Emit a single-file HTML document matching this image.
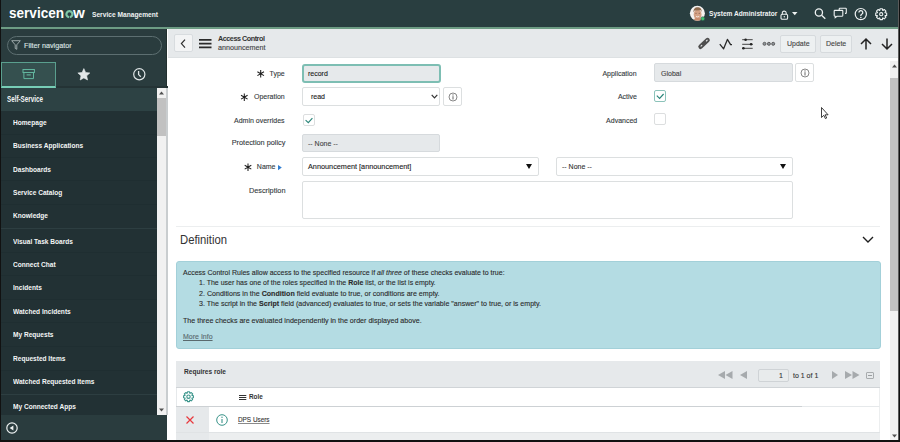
<!DOCTYPE html>
<html><head><meta charset="utf-8">
<style>
*{margin:0;padding:0;box-sizing:border-box}
html,body{width:900px;height:442px;overflow:hidden;background:#fff;font-family:"Liberation Sans",sans-serif}
.a{position:absolute}
.t{position:absolute;white-space:nowrap;line-height:1;-webkit-text-stroke:0.12px currentColor}
#frame{position:absolute;left:0;top:0;width:900px;height:442px;overflow:hidden;background:#fff}
.nav{-webkit-text-stroke:0;color:#f4f6f6;font-size:8px;font-weight:bold;left:12.5px;transform:scaleX(0.82);transform-origin:0 0}
.lab{color:#353b3e;font-size:7.7px;transform:scaleX(0.91);transform-origin:100% 0}
.box{position:absolute;border:1px solid #dcdfe0;border-radius:2px;background:#fff}
.ro{background:#e6e9eb;border-color:#d6dadd}
.cb{position:absolute;width:12px;height:12px;border:1px solid #dcdedf;border-radius:2px;background:#fff}
.ast{position:absolute;font-size:10px;color:#2b2b2b;line-height:1}
svg{position:absolute;overflow:visible}
</style></head><body>
<div id="frame">
<!-- ===== top header ===== -->
<div class="a" style="left:0;top:0;width:900px;height:27px;background:#293e40"></div>
<div class="a" style="left:0;top:27px;width:900px;height:2px;background:#6d9c84"></div>
<div class="t" style="left:9.4px;top:4.5px;font-size:15.5px;font-weight:bold;color:#fff;-webkit-text-stroke:0;transform:scaleX(0.875);transform-origin:0 0">servicen</div>
<svg style="left:64px;top:8.5px" width="11" height="10" viewBox="0 0 11 10"><path d="M5.034 8.178A3.0 3.0 0 1 1 5.766 8.178" fill="none" stroke="#7ec5a5" stroke-width="2.2"/></svg>
<div class="t" style="left:73px;top:4.5px;font-size:15.5px;font-weight:bold;color:#fff;-webkit-text-stroke:0;transform:scaleX(0.98);transform-origin:0 0">w</div>
<div class="t" style="left:92px;top:10.6px;font-size:8px;font-weight:bold;-webkit-text-stroke:0;transform:scaleX(0.83);transform-origin:0 0;color:#eef2f2">Service Management</div>
<!-- avatar in overlay -->
<div class="t" style="left:709px;top:10.2px;font-size:8px;font-weight:bold;-webkit-text-stroke:0;transform:scaleX(0.824);transform-origin:0 0;color:#f0f3f3">System Administrator</div>
<!-- lock -->
<svg style="left:780px;top:9.5px" width="9" height="10" viewBox="0 0 9 10"><path d="M2.3 4.4V3.1a1.95 1.95 0 0 1 3.9 0v1.3" fill="none" stroke="#e9eded" stroke-width="1.1"/><rect x="1" y="4.3" width="6.6" height="4.9" rx="1.3" fill="none" stroke="#e9eded" stroke-width="1.1"/><circle cx="4.3" cy="6.8" r="0.7" fill="#e9eded"/></svg>
<svg style="left:792px;top:12px" width="6" height="4" viewBox="0 0 6 4"><path d="M0 0h5.5L2.75 3.2z" fill="#eef2f2"/></svg>





<!-- ===== sidebar ===== -->
<div class="a" style="left:0;top:29px;width:167px;height:413px;background:#2a3c3e"></div>
<div class="a" style="left:7px;top:36px;width:155px;height:19px;border:1px solid #5d6f71;border-radius:10px"></div>
<svg style="left:11px;top:40px" width="10" height="10" viewBox="0 0 10 10"><path d="M0.7 0.7h8.6L5.8 4.8V9.3L4.2 8.4V4.8z" fill="none" stroke="#a9b4b5" stroke-width="0.9" stroke-linejoin="round"/></svg>
<div class="t" style="left:24px;top:42px;font-size:7.2px;color:#dfe5e5">Filter navigator</div>
<!-- tabs -->
<div class="a" style="left:1px;top:62px;width:55px;height:26px;background:#35504f;border:1px solid #5a9f8e;border-bottom:2px solid #77cdb6"></div>
<svg style="left:133px;top:68px" width="13" height="13" viewBox="0 0 13 13"><circle cx="6.3" cy="6.3" r="5.6" fill="none" stroke="#dfe5e6" stroke-width="1.2"/><path d="M5.6 3v3.6l2.2 2.2" fill="none" stroke="#dfe5e6" stroke-width="1.3"/></svg>
<!-- self-service -->
<div class="a" style="left:0;top:88px;width:157px;height:23px;background:#2d4244"></div>
<div class="a" style="left:56px;top:86px;width:112px;height:2px;background:#243335"></div>
<div class="t nav" style="left:6.8px;top:94.6px;font-size:8.3px;transform:scaleX(0.755)">Self-Service</div>
<div class="a" style="left:0;top:111px;width:157px;height:304px;background:#223134"></div>
<div class="a" style="left:0;top:134px;width:157px;height:1px;background:#1f2e31"></div><div class="a" style="left:0;top:157px;width:157px;height:1px;background:#1f2e31"></div><div class="a" style="left:0;top:180px;width:157px;height:1px;background:#1f2e31"></div><div class="a" style="left:0;top:204px;width:157px;height:1px;background:#1f2e31"></div><div class="a" style="left:0;top:252px;width:157px;height:1px;background:#1f2e31"></div><div class="a" style="left:0;top:275px;width:157px;height:1px;background:#1f2e31"></div><div class="a" style="left:0;top:299px;width:157px;height:1px;background:#1f2e31"></div><div class="a" style="left:0;top:322px;width:157px;height:1px;background:#1f2e31"></div><div class="a" style="left:0;top:346px;width:157px;height:1px;background:#1f2e31"></div><div class="a" style="left:0;top:370px;width:157px;height:1px;background:#1f2e31"></div>
<div class="a" style="left:0;top:228px;width:157px;height:1px;background:#2d3e41"></div>
<div class="a" style="left:0;top:394px;width:157px;height:1px;background:#2d3e41"></div>
<div class="t nav" style="top:119px">Homepage</div>
<div class="t nav" style="top:142px">Business Applications</div>
<div class="t nav" style="top:166px">Dashboards</div>
<div class="t nav" style="top:189px">Service Catalog</div>
<div class="t nav" style="top:212px">Knowledge</div>
<div class="t nav" style="top:238px">Visual Task Boards</div>
<div class="t nav" style="top:261px">Connect Chat</div>
<div class="t nav" style="top:284px">Incidents</div>
<div class="t nav" style="top:308px">Watched Incidents</div>
<div class="t nav" style="top:331px">My Requests</div>
<div class="t nav" style="top:355px">Requested Items</div>
<div class="t nav" style="top:378px">Watched Requested Items</div>
<div class="t nav" style="top:403px">My Connected Apps</div>
<!-- sidebar scrollbar -->
<div class="a" style="left:157px;top:88px;width:9px;height:327px;background:#f1f1f1"></div>
<div class="a" style="left:157px;top:98px;width:9px;height:38px;background:#c1c1c1"></div>
<svg style="left:159px;top:91px" width="5" height="4" viewBox="0 0 5 4"><path d="M0 3.5h5L2.5 0.5z" fill="#505050"/></svg>
<svg style="left:159px;top:408px" width="5" height="4" viewBox="0 0 5 4"><path d="M0 0.5h5L2.5 3.5z" fill="#505050"/></svg>
<!-- bottom bar -->
<div class="a" style="left:0;top:415px;width:167px;height:27px;background:#2a3c3e"></div>
<svg style="left:6.3px;top:422.2px" width="12" height="12" viewBox="0 0 12 12"><circle cx="6" cy="6" r="5.2" fill="none" stroke="#eef2f2" stroke-width="1.2"/><path d="M7.4 3.4v5.2L3.6 6z" fill="#eef2f2"/></svg>
<div class="a" style="left:166px;top:88px;width:2px;height:327px;background:#c9cdcf"></div><div class="a" style="left:166px;top:29px;width:1px;height:59px;background:#22302f"></div>

<!-- ===== main header ===== -->
<div class="a" style="left:168px;top:29px;width:731px;height:28.5px;background:#e6e9eb;border-bottom:1px solid #dde1e3"></div>
<div class="a" style="left:174px;top:34px;width:19px;height:18px;background:#f3f4f5;border:1px solid #d8dcdf;border-radius:2px"></div>
<svg style="left:180px;top:38px" width="6" height="10" viewBox="0 0 6 10"><path d="M5 1.6L1.4 5.6 5 9.6" fill="none" stroke="#2e2e2e" stroke-width="1.2"/></svg>
<svg style="left:199px;top:38px" width="13" height="11" viewBox="0 0 13 11"><path d="M0 1.8h12.5M0 5.6h12.5M0 9.4h12.5" stroke="#2b2b2b" stroke-width="1.8"/></svg>
<div class="t" style="left:218px;top:35px;font-size:7.2px;font-weight:bold;color:#333;letter-spacing:-0.45px;-webkit-text-stroke:0">Access Control</div>
<div class="t" style="left:218px;top:43.6px;font-size:7.2px;color:#444">announcement</div>
<!-- toolbar icons -->
<div class="a" style="left:780px;top:35px;width:36px;height:18px;background:#edf0f1;border:1px solid #d6dadd;border-radius:2px"></div>
<div class="t" style="left:787px;top:40px;font-size:7.7px;transform:scaleX(0.91);transform-origin:0 0;color:#444">Update</div>
<div class="a" style="left:820px;top:35px;width:32px;height:18px;background:#edf0f1;border:1px solid #d6dadd;border-radius:2px"></div>
<div class="t" style="left:826px;top:40px;font-size:7.7px;transform:scaleX(0.91);transform-origin:0 0;color:#444">Delete</div>
<svg style="left:860px;top:38px" width="12" height="12" viewBox="0 0 12 12"><path d="M6 11.5V1M1 6l5-5 5 5" fill="none" stroke="#222" stroke-width="1.5"/></svg>
<svg style="left:881px;top:38px" width="12" height="12" viewBox="0 0 12 12"><path d="M6 0.5V11M1 6l5 5 5-5" fill="none" stroke="#222" stroke-width="1.5"/></svg>

<!-- ===== main scrollbar ===== -->
<div class="a" style="left:889.5px;top:61px;width:8.5px;height:381px;background:#f1f1f1"></div>
<div class="a" style="left:889.5px;top:78px;width:8.5px;height:233px;background:#c1c1c1"></div>
<svg style="left:891.5px;top:64px" width="5" height="4" viewBox="0 0 5 4"><path d="M0 3.5h5L2.5 0.5z" fill="#505050"/></svg>
<svg style="left:891.5px;top:434px" width="5" height="4" viewBox="0 0 5 4"><path d="M0 0.5h5L2.5 3.5z" fill="#505050"/></svg>

<!-- ===== form ===== -->
<div class="t lab" style="right:615.3px;top:69.5px">Type</div>
<div class="box ro" style="left:302px;top:63.5px;width:139px;height:19.5px;border:2px solid #7dbeb3;border-radius:3px"></div>
<div class="t" style="left:308px;top:69.5px;font-size:7.7px;transform:scaleX(0.91);transform-origin:0 0;color:#222">record</div>

<div class="t lab" style="right:615.3px;top:93px">Operation</div>
<div class="box" style="left:302px;top:87px;width:138px;height:19px"></div>
<div class="t" style="left:311px;top:93px;font-size:7.7px;transform:scaleX(0.91);transform-origin:0 0;color:#222">read</div>
<svg style="left:431px;top:94px" width="7" height="5" viewBox="0 0 7 5"><path d="M0.7 0.8L3.5 3.8 6.3 0.8" fill="none" stroke="#333" stroke-width="1.2"/></svg>
<div class="box" style="left:443px;top:87px;width:19px;height:19px"></div>
<svg style="left:447.5px;top:91.5px" width="10" height="10" viewBox="0 0 10 10"><circle cx="5" cy="5" r="4" fill="none" stroke="#6a6a6a" stroke-width="0.8"/><path d="M5 4.2v3.3" stroke="#555" stroke-width="0.9"/><circle cx="5" cy="2.9" r="0.55" fill="#555"/></svg>

<div class="t lab" style="right:615.3px;top:116.5px">Admin overrides</div>
<div class="cb" style="left:302.5px;top:113.5px"></div>
<svg style="left:302.5px;top:113.5px" width="12" height="12" viewBox="0 0 12 12"><path d="M2.6 6.1L5.3 8.6 9.4 4.2" fill="none" stroke="#2a8579" stroke-width="1.15"/></svg>

<div class="t lab" style="right:615.0px;top:139px;transform:scaleX(0.952)">Protection policy</div>
<div class="box ro" style="left:302px;top:134px;width:138px;height:18px"></div>
<div class="t" style="left:308px;top:140px;font-size:7.7px;transform:scaleX(0.91);transform-origin:0 0;color:#444">-- None --</div>

<div class="t lab" style="right:624.5px;top:163px">Name</div>
<svg style="left:278.2px;top:165.2px" width="4" height="5.2" viewBox="0 0 4 5.2"><path d="M0 0l3.8 2.6L0 5.2z" fill="#2f7dd1"/></svg>
<div class="box" style="left:302px;top:157px;width:237px;height:19px"></div>
<div class="t" style="left:308px;top:163px;font-size:7.7px;transform:scaleX(0.948);transform-origin:0 0;color:#222">Announcement [announcement]</div>
<svg style="left:526px;top:164px" width="6" height="5" viewBox="0 0 6 5"><path d="M0 0h6L3 5z" fill="#111"/></svg>
<div class="box" style="left:556px;top:157px;width:237px;height:19px"></div>
<div class="t" style="left:562px;top:163px;font-size:7.7px;transform:scaleX(0.91);transform-origin:0 0;color:#333">-- None --</div>
<svg style="left:780px;top:164px" width="6" height="5" viewBox="0 0 6 5"><path d="M0 0h6L3 5z" fill="#111"/></svg>

<div class="t lab" style="right:615.0px;top:186.5px;transform:scaleX(0.95)">Description</div>
<div class="box" style="left:302px;top:181px;width:491px;height:38px"></div>

<div class="t lab" style="right:263.0px;top:69.5px">Application</div>
<div class="box ro" style="left:654px;top:63px;width:139px;height:19px"></div>
<div class="t" style="left:661px;top:69.5px;font-size:7.7px;transform:scaleX(0.91);transform-origin:0 0;color:#444">Global</div>
<div class="box" style="left:795px;top:63px;width:19px;height:19px"></div>
<svg style="left:799.5px;top:67.5px" width="10" height="10" viewBox="0 0 10 10"><circle cx="5" cy="5" r="4" fill="none" stroke="#6a6a6a" stroke-width="0.8"/><path d="M5 4.2v3.3" stroke="#555" stroke-width="0.9"/><circle cx="5" cy="2.9" r="0.55" fill="#555"/></svg>
<div class="t lab" style="right:263.0px;top:93px">Active</div>
<div class="cb" style="left:654.2px;top:90px;border-color:#8cc3ba;border-width:1.2px"></div>
<svg style="left:654.2px;top:90px" width="12" height="12" viewBox="0 0 12 12"><path d="M2.8 5.7L5.6 8.4 9.6 4" fill="none" stroke="#2a8579" stroke-width="1.15"/></svg>
<div class="t lab" style="right:263.0px;top:116.5px">Advanced</div>
<div class="cb" style="left:654.2px;top:113.3px"></div>
<!-- cursor -->
<svg style="left:820.6px;top:106.6px" width="7" height="12" viewBox="0 0 7 12"><path d="M0.5 0.5v10l2.3-2.2 1.6 3.3 1.3-.6-1.6-3.2h3z" fill="#fff" stroke="#111" stroke-width="0.8"/></svg>

<!-- definition -->
<div class="a" style="left:176px;top:226px;width:704px;height:1px;background:#eceeef"></div>
<div class="t" style="left:179.5px;top:234px;font-size:12px;color:#333;-webkit-text-stroke:0;transform:scaleX(0.94);transform-origin:0 0">Definition</div>
<svg style="left:862px;top:236px" width="12" height="8" viewBox="0 0 12 8"><path d="M1 1l5 5 5-5" fill="none" stroke="#1e1e1e" stroke-width="1.35"/></svg>
<div class="a" style="left:176px;top:261px;width:705px;height:88px;background:#b4dce3;border:1px solid #a3d0d9;border-radius:3px"></div>
<div class="t" style="left:183px;top:269px;font-size:7.7px;transform:scaleX(0.91);transform-origin:0 0;color:#2b2b2b">Access Control Rules allow access to the specified resource if <i>all three</i> of these checks evaluate to true:</div>
<div class="t" style="left:199px;top:279px;font-size:7.7px;transform:scaleX(0.91);transform-origin:0 0;color:#2b2b2b">1. The user has one of the roles specified in the <b>Role</b> list, or the list is empty.</div>
<div class="t" style="left:199px;top:290px;font-size:7.7px;transform:scaleX(0.922);transform-origin:0 0;color:#2b2b2b">2. Conditions in the <b>Condition</b> field evaluate to true, or conditions are empty.</div>
<div class="t" style="left:199px;top:300px;font-size:7.7px;transform:scaleX(0.92);transform-origin:0 0;color:#2b2b2b">3. The script in the <b>Script</b> field (advanced) evaluates to true, or sets the variable "answer" to true, or is empty.</div>
<div class="t" style="left:183px;top:317px;font-size:7.7px;transform:scaleX(0.923);transform-origin:0 0;color:#2b2b2b">The three checks are evaluated independently in the order displayed above.</div>
<div class="t" style="left:183px;top:333px;font-size:7.7px;transform:scaleX(0.91);transform-origin:0 0;color:#5a6a6e;text-decoration:underline">More Info</div>

<!-- related list -->
<div class="a" style="left:176px;top:361px;width:704px;height:27px;background:#e6e9eb;border-bottom:1px solid #d0d4d7"></div>
<div class="t" style="left:184px;top:368px;font-size:7.7px;font-weight:bold;-webkit-text-stroke:0;transform:scaleX(0.855);transform-origin:0 0;color:#333">Requires role</div>
<svg style="left:718px;top:371px" width="15" height="8" viewBox="0 0 15 8"><path d="M7 0v8L0 4zM14.5 0v8L7.5 4z" fill="#a6aaad"/></svg>
<svg style="left:740px;top:371px" width="7" height="8" viewBox="0 0 7 8"><path d="M7 0v8L0 4z" fill="#a6aaad"/></svg>
<div class="a" style="left:758px;top:369px;width:31px;height:13px;background:#e8ebec;border:1px solid #cfd3d6;border-radius:2px"></div>
<div class="t" style="left:779px;top:372px;font-size:7.7px;transform:scaleX(0.91);transform-origin:0 0;color:#333">1</div>
<div class="t" style="left:793px;top:372px;font-size:7.7px;transform:scaleX(0.91);transform-origin:0 0;color:#333">to 1 of 1</div>
<svg style="left:832px;top:371px" width="6" height="8" viewBox="0 0 6 8"><path d="M0 0v8L6 4z" fill="#a6aaad"/></svg>
<svg style="left:845px;top:371px" width="15" height="8" viewBox="0 0 15 8"><path d="M0 0v8L7 4zM7.5 0v8L14.5 4z" fill="#a6aaad"/></svg>
<div class="a" style="left:866px;top:371.5px;width:7.5px;height:7.5px;border:1px solid #a8acae;border-radius:1px"></div>
<div class="a" style="left:868px;top:374.7px;width:3.5px;height:1px;background:#9a9ea0"></div>
<div class="a" style="left:176px;top:388px;width:704px;height:19px;background:#fff;border-left:1px solid #e6e9eb;border-right:1px solid #eceeef;border-bottom:1px solid #e6e9eb"></div><div class="a" style="left:176px;top:406px;width:626px;height:1px;background:#cdd1d4"></div>

<svg style="left:239px;top:394px" width="8" height="7" viewBox="0 0 8 7"><path d="M0 1.5h7.3M0 3.5h7.3M0 5.5h7.3" stroke="#333" stroke-width="1"/></svg>
<div class="t" style="left:249px;top:393px;font-size:8px;font-weight:bold;color:#333;-webkit-text-stroke:0;transform:scaleX(0.8);transform-origin:0 0">Role</div>
<div class="a" style="left:176px;top:407px;width:33px;height:25px;background:#e6e9eb"></div>
<div class="a" style="left:209px;top:407px;width:671px;height:25px;background:#fff;border-right:1px solid #eceeef"></div>
<svg style="left:186px;top:416px" width="8" height="8" viewBox="0 0 8 8"><path d="M0.5 0.5l7 7M7.5 0.5l-7 7" stroke="#e8383d" stroke-width="1.2"/></svg>
<svg style="left:216px;top:414px" width="12" height="12" viewBox="0 0 12 12"><circle cx="6" cy="6" r="5.3" fill="none" stroke="#3a948a" stroke-width="1"/><path d="M6 5v4" stroke="#3a948a" stroke-width="1.1"/><circle cx="6" cy="3.3" r="0.7" fill="#3a948a"/></svg>
<div class="t" style="left:238px;top:416px;font-size:7.7px;transform:scaleX(0.83);transform-origin:0 0;color:#333;text-decoration:underline;text-decoration-color:#8a8a8a">DPS Users</div>
<div class="a" style="left:176px;top:432px;width:704px;height:10px;background:#eceeef;border-top:1px solid #e0e3e5"></div><div class="a" style="left:176px;top:433px;width:33px;height:9px;background:#e6e9eb"></div>

<!-- overlay icons in page coords -->
<svg style="left:0;top:0" width="900" height="442" viewBox="0 0 900 442">
<g id="toolbar">
<path d="M700.6 46.7L707.5 40.2" stroke="#4e4e4e" stroke-width="4.6" stroke-linecap="round"/>
<path d="M701 46.2l.8-.8M706.4 41l.8-.8" stroke="#e6e9eb" stroke-width="1.1" stroke-linecap="round"/>
<path d="M719.8 44.2L723.6 48.8 727.4 39.4 730.6 44.6H732" fill="none" stroke="#2a2a2a" stroke-width="1.3" stroke-linejoin="round"/>
<path d="M742.2 39.7h10.5M742.2 44.3h10.5M742.2 48.3h10.5" stroke="#444" stroke-width="1"/>
<circle cx="745.6" cy="39.7" r="1.3" fill="#222"/><circle cx="751.1" cy="44.3" r="1.3" fill="#222"/><circle cx="743.4" cy="48.3" r="1.3" fill="#222"/>
<circle cx="764.5" cy="43.8" r="1.5" fill="#8d949a" stroke="#5e5e5e" stroke-width="1"/><circle cx="768.9" cy="43.8" r="1.5" fill="#8d949a" stroke="#5e5e5e" stroke-width="1"/><circle cx="773.2" cy="43.8" r="1.5" fill="#8d949a" stroke="#5e5e5e" stroke-width="1"/>
</g>
<g id="ast"><path d="M260.7 69.90V77.50M257.41 71.80L263.99 75.60M257.41 75.60L263.99 71.80" stroke="#1e1e1e" stroke-width="1.05"/><path d="M244.3 93.40V101.00M241.01 95.30L247.59 99.10M241.01 99.10L247.59 95.30" stroke="#1e1e1e" stroke-width="1.05"/><path d="M248 163.40V171.00M244.71 165.30L251.29 169.10M244.71 169.10L251.29 165.30" stroke="#1e1e1e" stroke-width="1.05"/></g>
<g id="avatar">
<clipPath id="avc"><circle cx="697.4" cy="13.3" r="7.4"/></clipPath>
<circle cx="697.4" cy="13.3" r="7.5" fill="#f4f2f0"/>
<g clip-path="url(#avc)">
<ellipse cx="697.6" cy="14.6" rx="3.9" ry="5" fill="#d4a184"/>
<path d="M693.4 12.5C693.4 8.6 695.3 7.3 697.6 7.3S701.8 8.6 701.8 12.2L700.8 10.2 694.5 10.4z" fill="#8f6b4e"/>
<path d="M693 21c1-2.5 2.5-3 4.6-3s3.6.5 4.6 3z" fill="#c98d6e"/>
<circle cx="696" cy="13.3" r="0.5" fill="#6a4a3a"/><circle cx="699.2" cy="13.3" r="0.5" fill="#6a4a3a"/>
<path d="M696 16.4q1.6 1 3.2 0" stroke="#fff" stroke-width="0.7" fill="none"/>
</g>
<circle cx="702.8" cy="18.7" r="2" fill="#40c070" stroke="#293e40" stroke-width="0.5"/>
</g>
<g id="tabs">
<rect x="23" y="69.5" width="11.4" height="3" fill="none" stroke="#62b59e" stroke-width="1"/>
<path d="M23.9 72.5V78.6H33.5V72.5" fill="none" stroke="#62b59e" stroke-width="1"/>
<path d="M26.6 74.9h4.2" stroke="#62b59e" stroke-width="1.1"/>
<path d="M83.85 68.60 L85.61 72.47 L89.84 72.95 L86.70 75.83 L87.55 80.00 L83.85 77.90 L80.15 80.00 L81.00 75.83 L77.86 72.95 L82.09 72.47z" fill="#e3e8e9" stroke="#e3e8e9" stroke-width="0.6" stroke-linejoin="round"/>
</g>
<g id="hdricons" fill="none" stroke="#eef2f2">
<circle cx="818.9" cy="12.5" r="3.6" stroke-width="1.3"/>
<path d="M821.6 15.3L825.3 18.8" stroke-width="1.4"/>
<path d="M839.2 10.1V8.9q0-.7.7-.7h5.7q.7 0 .7.7v3.8q0 .7-.7.7H845" stroke-width="1.1"/>
<path d="M834.8 10.4h7.4q.6 0 .6.6v4.6q0 .6-.6.6h-5.2l-1.8 1.4v-1.4h-.4q-.6 0-.6-.6v-4.6q0-.6.6-.6z" stroke-width="1.1"/>
<circle cx="860.8" cy="14.1" r="5.6" stroke-width="1.2"/>
<path d="M858.9 12.5a1.95 1.95 0 1 1 2.8 1.75c-.6.3-.85.65-.85 1.35v.3" stroke-width="1.3"/>
<circle cx="860.85" cy="17.5" r="0.8" fill="#eef2f2" stroke="none"/>
<path d="M879.76 10.36 L879.98 8.73 L882.42 8.73 L882.64 10.36 L882.89 10.47 L884.20 9.47 L885.93 11.20 L884.93 12.51 L885.04 12.76 L886.67 12.98 L886.67 15.42 L885.04 15.64 L884.93 15.89 L885.93 17.20 L884.20 18.93 L882.89 17.93 L882.64 18.04 L882.42 19.67 L879.98 19.67 L879.76 18.04 L879.51 17.93 L878.20 18.93 L876.47 17.20 L877.47 15.89 L877.36 15.64 L875.73 15.42 L875.73 12.98 L877.36 12.76 L877.47 12.51 L876.47 11.20 L878.20 9.47 L879.51 10.47z" stroke-width="1.1" stroke-linejoin="round"/>
<circle cx="881.2" cy="14.2" r="1.6" stroke-width="1.1"/>
</g>
<g id="tblgear"><path d="M187.20 393.24 L187.51 391.80 L189.49 391.80 L189.80 393.24 L190.03 393.33 L191.26 392.53 L192.67 393.94 L191.87 395.17 L191.96 395.40 L193.40 395.71 L193.40 397.69 L191.96 398.00 L191.87 398.23 L192.67 399.46 L191.26 400.87 L190.03 400.07 L189.80 400.16 L189.49 401.60 L187.51 401.60 L187.20 400.16 L186.97 400.07 L185.74 400.87 L184.33 399.46 L185.13 398.23 L185.04 398.00 L183.60 397.69 L183.60 395.71 L185.04 395.40 L185.13 395.17 L184.33 393.94 L185.74 392.53 L186.97 393.33z" fill="none" stroke="#3a958b" stroke-width="1.1" stroke-linejoin="round"/><circle cx="188.5" cy="396.7" r="1.7" fill="none" stroke="#3a958b" stroke-width="1.1"/></g>
</svg>
<!-- frame borders -->
<div class="a" style="left:0;top:0;width:1px;height:442px;background:#111"></div>
<div class="a" style="left:898px;top:0;width:1px;height:442px;background:#5a5a5a"></div><div class="a" style="left:899px;top:0;width:1px;height:442px;background:#111"></div>
<div class="a" style="left:0;top:440px;width:900px;height:2px;background:#111"></div>
</div>
</body></html>
